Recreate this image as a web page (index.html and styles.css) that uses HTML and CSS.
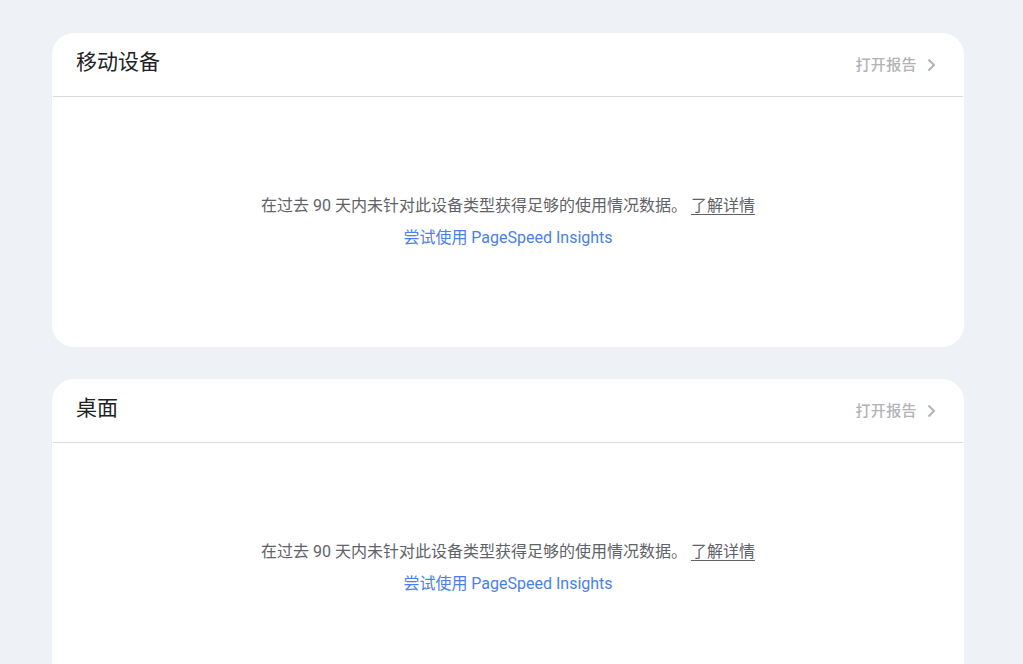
FILE: index.html
```html
<!DOCTYPE html>
<html lang="zh-CN">
<head>
    <meta charset="UTF-8">
    <meta name="viewport" content="width=device-width, initial-scale=1.0">
    <title>核心网页指标</title>
    <link rel="stylesheet" href="styles.css">
</head>
<body>
    <main class="page">
        <section class="card">
            <header class="card-header">
                <h2 class="card-title">移动设备</h2>
                <a class="open-report" href="#">打开报告
                    <svg class="chevron" viewBox="0 0 16 16" width="16" height="16"><path d="M5.5 2.5l5.5 5.5-5.5 5.5" fill="none" stroke="currentColor" stroke-width="2"/></svg>
                </a>
            </header>
            <div class="card-body">
                <p class="empty-text">在过去 90 天内未针对此设备类型获得足够的使用情况数据。 <a class="learn-more" href="#">了解详情</a></p>
                <a class="psi-link" href="#">尝试使用 PageSpeed Insights</a>
            </div>
        </section>

        <section class="card">
            <header class="card-header">
                <h2 class="card-title">桌面</h2>
                <a class="open-report" href="#">打开报告
                    <svg class="chevron" viewBox="0 0 16 16" width="16" height="16"><path d="M5.5 2.5l5.5 5.5-5.5 5.5" fill="none" stroke="currentColor" stroke-width="2"/></svg>
                </a>
            </header>
            <div class="card-body">
                <p class="empty-text">在过去 90 天内未针对此设备类型获得足够的使用情况数据。 <a class="learn-more" href="#">了解详情</a></p>
                <a class="psi-link" href="#">尝试使用 PageSpeed Insights</a>
            </div>
        </section>
    </main>
</body>
</html>
```

FILE: styles.css
```css
:root {
    --color-bg: #eef1f6;
    --color-card: #ffffff;
    --color-title: #202124;
    --color-text: #5f6368;
    --color-muted: #b1b3b6;
    --color-link: #4a80ec;
    --color-divider: #dadce0;
}

* {
    margin: 0;
    padding: 0;
    box-sizing: border-box;
}

body {
    background-color: var(--color-bg);
    font-family: Roboto, "Noto Sans CJK SC", sans-serif;
    color: var(--color-text);
}

.page {
    display: flex;
    flex-direction: column;
    gap: 32px;
    padding: 33px 59px 40px 52px;
}

.card {
    background-color: var(--color-card);
    border-radius: 22px;
    overflow: hidden;
}

.card-header {
    display: flex;
    justify-content: space-between;
    align-items: center;
    height: 64px;
    padding: 0 24px 4px 23px;
    border-bottom: 1px solid var(--color-divider);
    margin: 0 1px;
}

.card-title {
    font-size: 21px;
    font-weight: 400;
    line-height: 28px;
    margin-top: -2px;
    color: var(--color-title);
}

.open-report {
    display: flex;
    align-items: center;
    gap: 6px;
    margin-top: 4px;
    font-size: 15px;
    font-weight: 500;
    letter-spacing: 0.4px;
    line-height: 20px;
    color: var(--color-muted);
    text-decoration: none;
}

.chevron {
    width: 16px;
    height: 16px;
}

.card-body {
    height: 250px;
    display: flex;
    flex-direction: column;
    align-items: center;
    justify-content: center;
    gap: 9px;
    padding-bottom: 2px;
    font-size: 16px;
    line-height: 23px;
}

.learn-more {
    color: var(--color-text);
    text-decoration: underline;
    text-underline-offset: 3px;
}

.psi-link {
    color: var(--color-link);
    text-decoration: none;
}
```
